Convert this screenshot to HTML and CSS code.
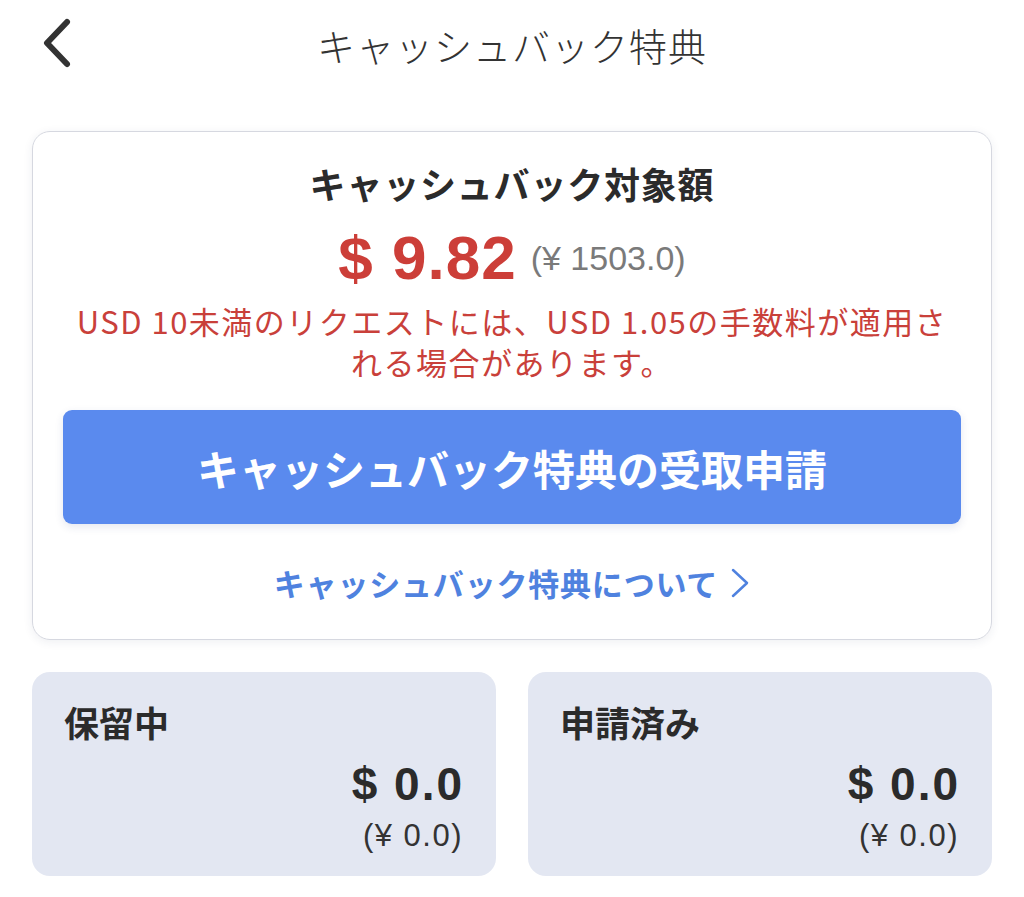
FILE: index.html
```html
<!DOCTYPE html>
<html>
<head>
    <title>キャッシュバック特典</title>
    <meta name="viewport" content="width=device-width, initial-scale=1">
    <link rel="stylesheet" href="styles.css">
</head>
<body>
    <div class="header">
        <a class="back" href="#">
            <svg width="40" height="52" viewBox="0 0 40 52">
                <path d="M32 5 L12 26 L32 47" fill="none" stroke="#333" stroke-width="6" stroke-linecap="round" stroke-linejoin="round"/>
            </svg>
        </a>
        <h1>キャッシュバック特典</h1>
    </div>

    <div class="card">
        <h2>キャッシュバック対象額</h2>
        <div class="amount">
            <span class="usd">$ 9.82</span>
            <span class="jpy">(¥ 1503.0)</span>
        </div>
        <p class="notice">USD 10未満のリクエストには、USD 1.05の手数料が適用される場合があります。</p>
        <button class="claim">キャッシュバック特典の受取申請</button>
        <a class="about" href="#">キャッシュバック特典について
            <svg width="20" height="30" viewBox="0 0 20 30">
                <path d="M3 2 L17 15 L3 28" fill="none" stroke="#4f82df" stroke-width="2.5" stroke-linecap="round" stroke-linejoin="round"/>
            </svg>
        </a>
    </div>

    <div class="totals">
        <div class="box">
            <div class="label">保留中</div>
            <div class="value">$ 0.0</div>
            <div class="sub">(¥ 0.0)</div>
        </div>
        <div class="box">
            <div class="label">申請済み</div>
            <div class="value">$ 0.0</div>
            <div class="sub">(¥ 0.0)</div>
        </div>
    </div>
</body>
</html>
```

FILE: styles.css
```css
body {
    font-family: "Noto Sans CJK JP", "Noto Sans", sans-serif;
    margin: 0;
    padding: 0 32px;
    background-color: #fff;
    color: #2b2b2b;
}
.header {
    position: relative;
    height: 88px;
    display: flex;
    align-items: center;
    justify-content: center;
}
.back {
    position: absolute;
    left: 3px;
    top: 17px;
    display: flex;
}
.header h1 {
    margin: 0;
    font-size: 38px;
    font-weight: 300;
    color: #333;
    letter-spacing: 1px;
}
.card {
    margin-top: 43px;
    border: 1px solid #d6d8e0;
    border-radius: 18px;
    box-shadow: 0 2px 10px rgba(40,50,90,0.08);
    padding: 26px 30px 36px;
    text-align: center;
}
.card h2 {
    margin: 0;
    font-size: 36px;
    font-weight: 700;
    line-height: 50px;
    letter-spacing: 0.8px;
    color: #2b2b2b;
}
.amount {
    display: flex;
    justify-content: center;
    align-items: center;
    gap: 14px;
    height: 68px;
    margin-top: 16px;
}
.usd {
    font-family: "Liberation Sans", sans-serif;
    font-size: 62px;
    line-height: 68px;
    font-weight: 700;
    letter-spacing: 1px;
    color: #cc3e38;
}
.jpy {
    font-family: "Liberation Sans", sans-serif;
    font-size: 34px;
    line-height: 68px;
    color: #7a7a7a;
}
.notice {
    margin: 8px 0 0;
    font-size: 31px;
    line-height: 41px;
    letter-spacing: 1.5px;
    color: #c9403a;
}
.claim {
    display: block;
    width: 100%;
    margin-top: 28px;
    height: 114px;
    border: none;
    border-radius: 9px;
    background-color: #5a8aee;
    box-shadow: 0 3px 8px rgba(40,60,120,0.12);
    color: white;
    font-family: inherit;
    font-size: 42px;
    font-weight: 700;
    cursor: pointer;
}
.about {
    display: flex;
    justify-content: center;
    align-items: center;
    gap: 12px;
    margin-top: 39px;
    height: 40px;
    font-size: 31px;
    font-weight: 700;
    letter-spacing: 0.8px;
    color: #4f82df;
    text-decoration: none;
    line-height: 40px;
}
.totals {
    display: grid;
    grid-template-columns: 1fr 1fr;
    gap: 32px;
    margin-top: 32px;
}
.box {
    box-sizing: border-box;
    height: 204px;
    background-color: #e3e7f2;
    border-radius: 18px;
    padding: 26px 32px 24px;
}
.label {
    font-size: 35px;
    font-weight: 700;
    line-height: 48px;
    color: #2b2b2b;
}
.value {
    text-align: right;
    font-family: "Liberation Sans", sans-serif;
    font-size: 46px;
    font-weight: 700;
    letter-spacing: 2px;
    line-height: 56px;
    margin-top: 10px;
    color: #2b2b2b;
}
.sub {
    text-align: right;
    font-family: "Liberation Sans", sans-serif;
    font-size: 31px;
    letter-spacing: 1.5px;
    line-height: 32px;
    margin-top: 8px;
    margin-right: 1px;
    color: #333;
}
```
